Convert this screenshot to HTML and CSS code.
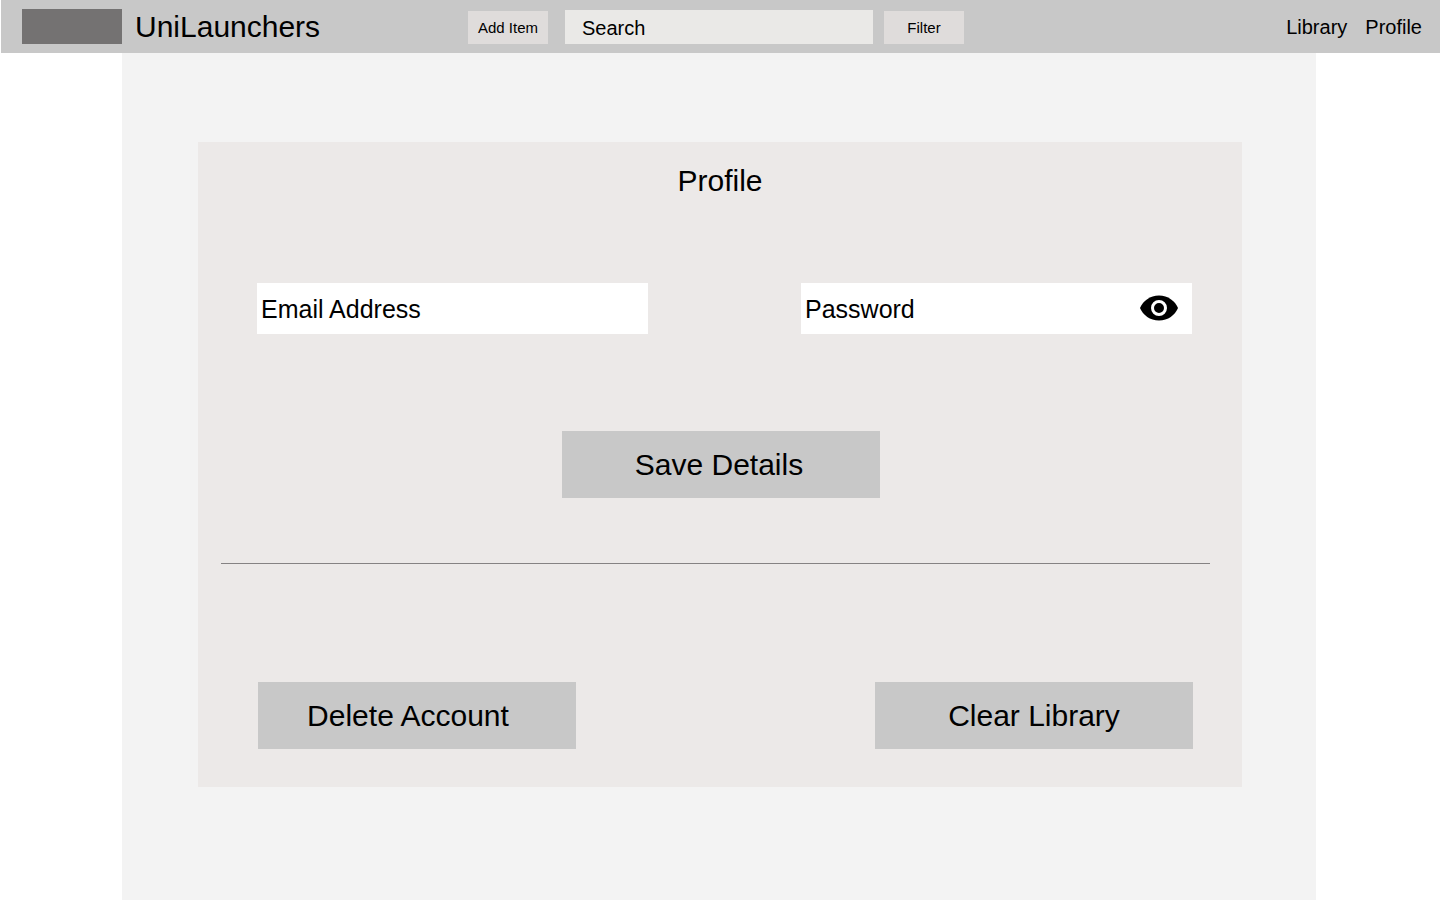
FILE: index.html
```html
<!DOCTYPE html>
<html lang="en">
<head>
<meta charset="utf-8">
<meta name="viewport" content="width=device-width, initial-scale=1">
<title>UniLaunchers - Profile</title>
<link rel="stylesheet" href="styles.css">
</head>
<body>
<header class="topbar">
  <div class="brand">
    <span class="brand-logo"></span>
    <span class="brand-name">UniLaunchers</span>
  </div>
  <div class="tools">
    <button class="tool-button" type="button">Add Item</button>
    <input class="search" type="search" placeholder="Search" aria-label="Search">
    <button class="tool-button" type="button">Filter</button>
  </div>
  <nav class="nav">
    <a href="#library">Library</a>
    <a href="#profile">Profile</a>
  </nav>
</header>
<main class="page">
  <section class="card">
    <h1 class="title">Profile</h1>
    <form class="details">
      <div class="fields">
        <div class="field">
          <input class="field-input" type="email" placeholder="Email Address" aria-label="Email Address">
        </div>
        <div class="field">
          <input class="field-input" type="password" placeholder="Password" aria-label="Password">
          <button class="reveal" type="button" aria-label="Show password">
            <svg class="eye" viewBox="0 0 38 26" aria-hidden="true">
              <path d="M0 13C3 6 10 0.500 19 0.500S35 6 38 13C35 20 28 25.500 19 25.500S3 20 0 13Z" fill="#000"/>
              <circle cx="19" cy="13" r="6.500" fill="#000" stroke="#fff" stroke-width="3"/>
            </svg>
          </button>
        </div>
      </div>
      <button class="action save" type="submit">Save Details</button>
    </form>
    <hr class="divider">
    <div class="account-actions">
      <button class="action delete" type="button">Delete Account</button>
      <button class="action" type="button">Clear Library</button>
    </div>
  </section>
</main>
</body>
</html>
```
FILE: styles.css
```css
* {
  box-sizing: border-box;
}

body {
  margin: 0;
  background: #fff;
  color: #000;
  font-family: "Liberation Sans", Arial, sans-serif;
}

button,
input {
  margin: 0;
  border: 0;
  border-radius: 0;
  color: inherit;
  font-family: inherit;
}

button {
  cursor: pointer;
}

input::placeholder {
  color: #000;
  opacity: 1;
}

.topbar {
  display: grid;
  grid-template-columns: 1fr auto 1fr;
  align-items: center;
  height: 53px;
  margin-left: 1px;
  padding: 0 18px 0 21px;
  background: #c8c8c8;
}

.brand {
  display: flex;
  align-items: center;
  gap: 13px;
}

.brand-logo {
  width: 100px;
  height: 35px;
  background: #747272;
}

.brand-name {
  font-size: 30px;
  line-height: 34px;
}

.tools {
  display: flex;
  align-items: flex-end;
  margin-right: 12px;
}

.tool-button {
  width: 80px;
  height: 33px;
  padding: 0;
  background: #dfdcdb;
  font-size: 15px;
}

.search {
  width: 308px;
  height: 34px;
  margin: 0 11px 0 17px;
  padding: 3px 17px 0;
  background: #eae9e7;
  font-size: 20px;
  appearance: none;
}

.nav {
  display: flex;
  justify-content: flex-end;
  gap: 18px;
  font-size: 20px;
  line-height: 24px;
}

.nav a {
  color: inherit;
  text-decoration: none;
}

.page {
  min-height: calc(100vh - 53px);
  margin: 0 124px 0 122px;
  padding: 89px 74px 113px 76px;
  background: #f3f3f3;
}

.card {
  padding: 22px 0 38px;
  background: #ece9e8;
}

.title {
  margin: 0 0 85px;
  font-size: 30px;
  font-weight: 400;
  line-height: 34px;
  text-align: center;
}

.details {
  display: flex;
  flex-direction: column;
  align-items: center;
}

.fields {
  display: flex;
  align-self: stretch;
  justify-content: space-between;
  margin-bottom: 97px;
  padding: 0 50px 0 59px;
}

.field {
  display: flex;
  align-items: center;
  width: 391px;
  height: 51px;
  background: #fff;
}

.field-input {
  flex: 1;
  min-width: 0;
  height: 100%;
  padding: 2px 4px 0;
  background: transparent;
  font-size: 25px;
}

.reveal {
  margin-right: 14px;
  padding: 0 0 2px;
  background: none;
}

.eye {
  display: block;
  width: 38px;
  height: 26px;
}

.action {
  width: 318px;
  height: 67px;
  padding: 0;
  background: #c8c8c8;
  font-size: 30px;
}

.save {
  margin-left: 2px;
  padding-right: 4px;
}

.delete {
  padding-right: 18px;
}

.divider {
  height: 1px;
  margin: 65px 32px 118px 23px;
  border: 0;
  background: #858283;
}

.account-actions {
  display: flex;
  justify-content: space-between;
  padding: 0 49px 0 60px;
}
```
